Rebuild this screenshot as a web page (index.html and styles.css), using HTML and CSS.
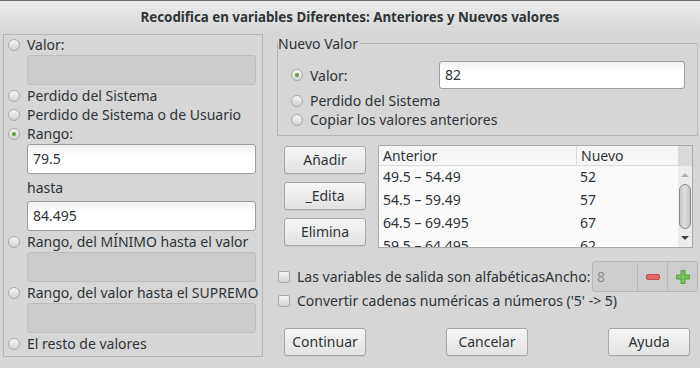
FILE: index.html
```html
<!DOCTYPE html>
<html lang="es">
<head>
    <meta charset="UTF-8">
    <title>Recodifica en variables Diferentes</title>
    <link rel="stylesheet" href="styles.css">
</head>
<body>
    <div class="titlebar">Recodifica en variables Diferentes: Anteriores y Nuevos valores</div>

    <div class="content">
        <div class="old-frame">
            <div class="opt"><span class="radio"></span>Valor:</div>
            <div class="entry disabled"></div>
            <div class="opt"><span class="radio"></span>Perdido del Sistema</div>
            <div class="opt"><span class="radio"></span>Perdido de Sistema o de Usuario</div>
            <div class="opt"><span class="radio on"></span>Rango:</div>
            <div class="entry">79.5</div>
            <div class="hasta">hasta</div>
            <div class="entry">84.495</div>
            <div class="opt"><span class="radio"></span>Rango, del MÍNIMO hasta el valor</div>
            <div class="entry disabled"></div>
            <div class="opt"><span class="radio"></span>Rango, del valor hasta el SUPREMO</div>
            <div class="entry disabled"></div>
            <div class="opt"><span class="radio"></span>El resto de valores</div>
        </div>

        <div class="right">
            <fieldset class="new-frame">
                <legend>Nuevo Valor</legend>
                <div class="new-value">
                    <div class="opt"><span class="radio on"></span>Valor:</div>
                    <div class="entry small">82</div>
                </div>
                <div class="opt"><span class="radio"></span>Perdido del Sistema</div>
                <div class="opt"><span class="radio"></span>Copiar los valores anteriores</div>
            </fieldset>

            <div class="list-row">
                <div class="list-buttons">
                    <div class="btn">Añadir</div>
                    <div class="btn">_Edita</div>
                    <div class="btn">Elimina</div>
                </div>
                <div class="table">
                    <div class="table-body">
                        <div class="row head">
                            <div class="col-a">Anterior</div>
                            <div class="col-b">Nuevo</div>
                        </div>
                        <div class="row"><div class="col-a">49.5 – 54.49</div><div class="col-b">52</div></div>
                        <div class="row"><div class="col-a">54.5 – 59.49</div><div class="col-b">57</div></div>
                        <div class="row"><div class="col-a">64.5 – 69.495</div><div class="col-b">67</div></div>
                        <div class="row"><div class="col-a">59.5 – 64.495</div><div class="col-b">62</div></div>
                    </div>
                    <div class="scrollbar">
                        <div class="corner"></div>
                        <div class="arrow up"></div>
                        <div class="thumb"></div>
                        <div class="arrow down"></div>
                    </div>
                </div>
            </div>

            <div class="check-row first">
                <span class="check"></span>Las variables de salida son alfabéticasAncho:
                <div class="spin">
                    <div class="spin-entry">8</div>
                    <div class="spin-btn">
                        <svg width="14" height="6" viewBox="0 0 14 6"><rect x="0.5" y="0.5" width="13" height="5" rx="1.5" fill="#e26a6a" stroke="#c94b4b"/></svg>
                    </div>
                    <div class="spin-btn">
                        <svg width="14" height="14" viewBox="0 0 14 14"><path d="M5 0.5h4v4.5h4.5v4h-4.5v4.5h-4v-4.5h-4.5v-4h4.5z" fill="#79c25f" stroke="#5a9c44"/></svg>
                    </div>
                </div>
            </div>
            <div class="check-row">
                <span class="check"></span>Convertir cadenas numéricas a números ('5' -&gt; 5)
            </div>

            <div class="actions">
                <div class="btn">Continuar</div>
                <div class="btn">Cancelar</div>
                <div class="btn">Ayuda</div>
            </div>
        </div>
    </div>
</body>
</html>
```

FILE: styles.css
```css
body {
    margin: 0;
    width: 700px;
    height: 368px;
    overflow: hidden;
    background: #d6d6d6;
    font-family: "Noto Sans", sans-serif;
    font-size: 14px;
    color: #2e3436;
}
.titlebar {
    height: 30px;
    line-height: 32px;
    text-align: center;
    font-size: 13.33px;
    font-weight: bold;
    border-top: 1px solid #6b6b6b;
    background: linear-gradient(#ebebeb, #d8d8d8);
}
.content {
    display: grid;
    grid-template-columns: 260px 421px;
    column-gap: 14px;
    padding: 3px 0 0 3px;
}
.old-frame {
    border: 1px solid #b4b4b4;
    height: 321px;
    padding-left: 4px;
}
.opt {
    display: flex;
    align-items: center;
    height: 19px;
    white-space: nowrap;
}
.radio {
    width: 10px;
    height: 10px;
    border: 1px solid #a9a9a9;
    border-radius: 50%;
    background: linear-gradient(#f6f6f6, #d2d2d2);
    margin-right: 7px;
    display: flex;
    align-items: center;
    justify-content: center;
}
.radio.on::after {
    content: "";
    width: 4px;
    height: 4px;
    border-radius: 50%;
    background: #5f9a3c;
}
.entry {
    box-sizing: border-box;
    width: 229px;
    height: 30px;
    margin: 1px 0 1px 19px;
    padding-left: 5px;
    line-height: 28px;
    border: 1px solid #9d9d9d;
    border-radius: 3px;
    background: linear-gradient(#f2f2f2, #ffffff 40%);
}
.entry.disabled {
    border-color: #bdbdbd;
    background: #cbcbcb;
}
.hasta {
    height: 25px;
    line-height: 25px;
    padding-left: 19px;
}
.right {
    display: flex;
    flex-direction: column;
}
.new-frame {
    margin: 0;
    padding: 0 0 6px 13px;
    border: 1px solid #b4b4b4;
    border-right-color: #c2c2c2;
}
.new-frame legend {
    padding: 0 2px 0 0;
    margin-left: -13px;
    line-height: 19px;
}
.new-value {
    display: flex;
    align-items: center;
    margin: 8px 0 2px;
}
.new-value .opt {
    width: 148px;
}
.entry.small {
    width: 246px;
    height: 28px;
    margin: 0;
    line-height: 26px;
}
.list-row {
    display: flex;
    margin-top: 9px;
    padding-left: 7px;
}
.list-buttons {
    display: flex;
    flex-direction: column;
    gap: 8px;
    padding-top: 1px;
    margin-right: 12px;
}
.btn {
    box-sizing: border-box;
    width: 82px;
    height: 28px;
    line-height: 26px;
    text-align: center;
    border: 1px solid #a6a6a6;
    border-radius: 3px;
    background: linear-gradient(#f6f6f6, #e2e2e2);
    box-shadow: 0 1px 0 rgba(0, 0, 0, 0.06);
}
.table {
    display: flex;
    width: 315px;
    height: 103px;
    box-sizing: border-box;
    border: 1px solid #a9a9a9;
    background: #fafafa;
    overflow: hidden;
}
.table-body {
    flex: 1;
}
.row {
    display: flex;
    height: 23px;
    line-height: 22px;
}
.row.head {
    height: 19px;
    line-height: 19px;
    background: #f6f6f6;
    border-bottom: 1px solid #dadada;
}
.col-a {
    width: 193px;
    padding-left: 4px;
}
.col-b {
    padding-left: 4px;
}
.head .col-a {
    border-right: 1px solid #dadada;
}
.scrollbar {
    width: 14px;
    display: flex;
    flex-direction: column;
    align-items: center;
    background: #ececec;
}
.corner {
    width: 14px;
    height: 20px;
    background: #d9d9d9;
}
.arrow {
    height: 18px;
    display: flex;
    align-items: center;
    justify-content: center;
}
.arrow::after {
    content: "";
    border-left: 4px solid transparent;
    border-right: 4px solid transparent;
}
.arrow.up::after {
    border-bottom: 4px solid #b2b2b2;
}
.arrow.down::after {
    border-top: 4px solid #444;
}
.thumb {
    box-sizing: border-box;
    width: 12px;
    height: 46px;
    border: 1px solid #8c8c8c;
    border-radius: 6px;
    background: linear-gradient(90deg, #c8c8c8, #dedede, #c4c4c4);
}
.check-row {
    display: flex;
    align-items: center;
    height: 17px;
    white-space: nowrap;
    padding-left: 1px;
}
.check-row.first {
    height: 31px;
    margin-top: 13px;
}
.check {
    box-sizing: border-box;
    width: 12px;
    height: 12px;
    border: 1px solid #a9a9a9;
    border-radius: 2px;
    background: linear-gradient(#f4f4f4, #d4d4d4);
    margin-right: 7px;
}
.spin {
    display: flex;
    margin-left: auto;
    box-sizing: border-box;
    width: 106px;
    height: 31px;
    border: 1px solid #b6b6b6;
    border-radius: 3px;
    background: #cdcdcd;
}
.spin-entry {
    width: 44px;
    padding-left: 4px;
    line-height: 29px;
    color: #8e8e8e;
    box-sizing: border-box;
}
.spin-btn {
    flex: 1;
    display: flex;
    align-items: center;
    justify-content: center;
    border-left: 1px solid #b9b9b9;
}
.actions {
    display: flex;
    justify-content: space-between;
    margin: 19px 8px 0 7px;
}
```
